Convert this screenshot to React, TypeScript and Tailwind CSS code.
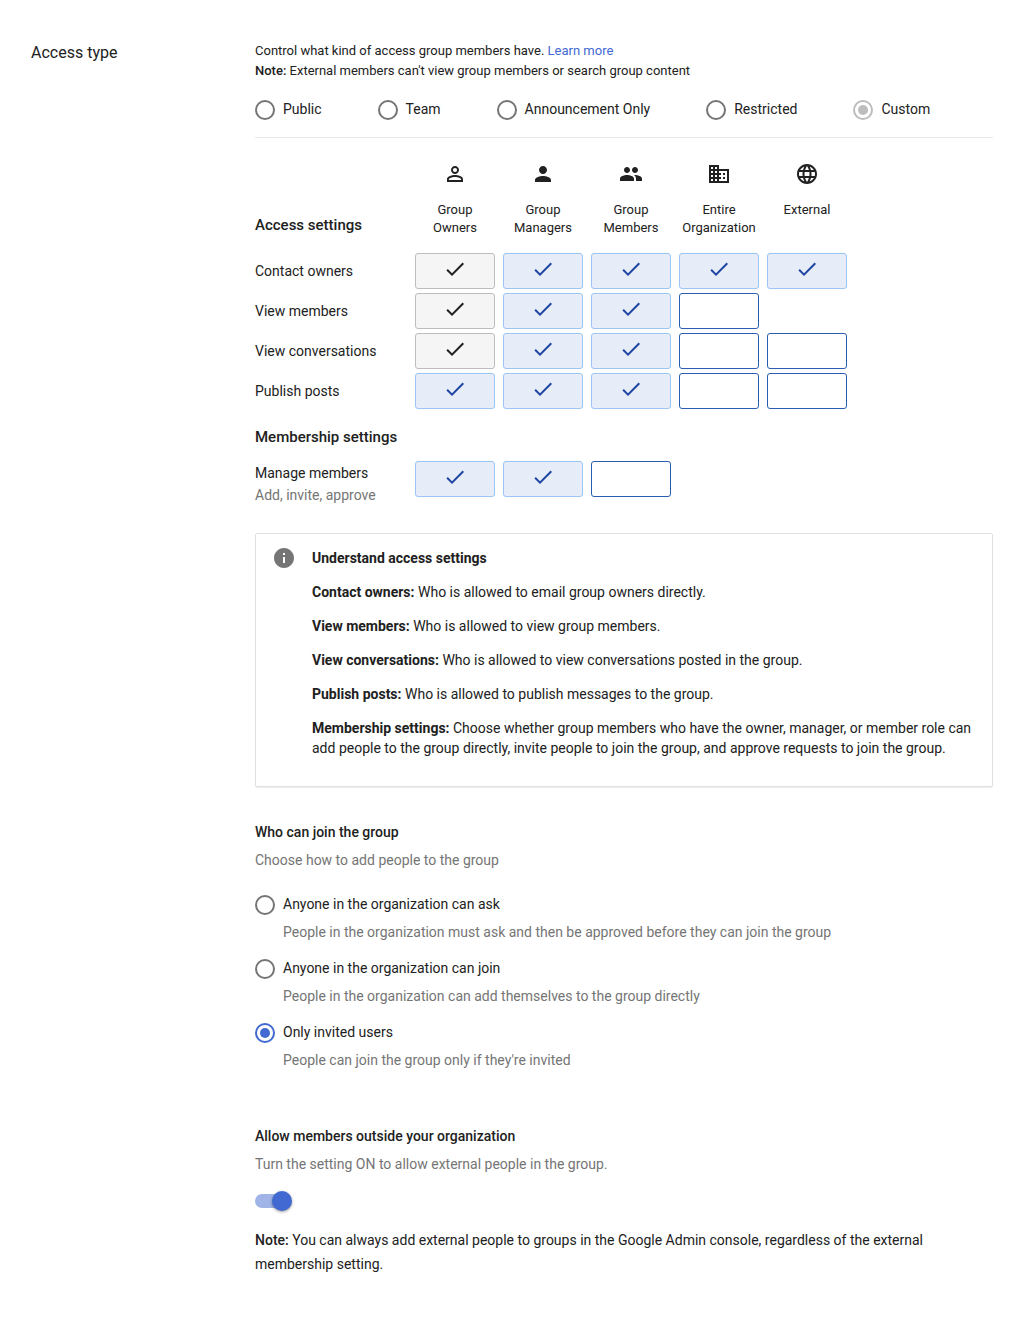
import type { ReactNode } from "react";
import {
  MdBusiness,
  MdCheck,
  MdInfo,
  MdLanguage,
  MdPeople,
  MdPerson,
  MdPersonOutline,
} from "react-icons/md";

type CellState = "locked" | "on" | "off" | "none";
type RadioState = "off" | "on" | "disabled";

const columns: { icon: ReactNode; lines: string[] }[] = [
  { icon: <MdPersonOutline />, lines: ["Group", "Owners"] },
  { icon: <MdPerson />, lines: ["Group", "Managers"] },
  { icon: <MdPeople />, lines: ["Group", "Members"] },
  { icon: <MdBusiness />, lines: ["Entire", "Organization"] },
  { icon: <MdLanguage />, lines: ["External"] },
];

const accessRows: { label: string; cells: CellState[] }[] = [
  { label: "Contact owners", cells: ["locked", "on", "on", "on", "on"] },
  { label: "View members", cells: ["locked", "on", "on", "off", "none"] },
  { label: "View conversations", cells: ["locked", "on", "on", "off", "off"] },
  { label: "Publish posts", cells: ["on", "on", "on", "off", "off"] },
];

const help = [
  ["Contact owners:", "Who is allowed to email group owners directly."],
  ["View members:", "Who is allowed to view group members."],
  ["View conversations:", "Who is allowed to view conversations posted in the group."],
  ["Publish posts:", "Who is allowed to publish messages to the group."],
  [
    "Membership settings:",
    "Choose whether group members who have the owner, manager, or member role can add people to the group directly, invite people to join the group, and approve requests to join the group.",
  ],
];

const joinOptions: { label: string; hint: string; state: RadioState }[] = [
  {
    label: "Anyone in the organization can ask",
    hint: "People in the organization must ask and then be approved before they can join the group",
    state: "off",
  },
  {
    label: "Anyone in the organization can join",
    hint: "People in the organization can add themselves to the group directly",
    state: "off",
  },
  {
    label: "Only invited users",
    hint: "People can join the group only if they're invited",
    state: "on",
  },
];

const ring: Record<RadioState, string> = {
  off: "border-[#757575]",
  on: "border-[#4169d1]",
  disabled: "border-[#bdbdbd]",
};

function Radio({ state }: { state: RadioState }) {
  return (
    <span
      className={`flex size-5 shrink-0 items-center justify-center rounded-full border-2 ${ring[state]}`}
    >
      {state === "on" && <span className="size-2.5 rounded-full bg-[#4169d1]" />}
      {state === "disabled" && <span className="size-2.5 rounded-full bg-[#bdbdbd]" />}
    </span>
  );
}

const cellStyle: Record<CellState, string> = {
  locked: "border-[#bdbdbd] bg-[#f5f5f5] text-[#212121]",
  on: "border-[#9ac5f4] bg-[#e7ecf9] text-[#1f46a0]",
  off: "border-[#2a5db0] bg-white",
  none: "border-transparent",
};

function Cell({ state }: { state: CellState }) {
  return (
    <div
      className={`flex h-9 w-20 shrink-0 justify-center rounded-[3px] border pt-[3px] ${cellStyle[state]}`}
    >
      {(state === "on" || state === "locked") && <MdCheck className="size-6" />}
    </div>
  );
}

export default function App() {
  return (
    <div className="flex h-[1324px] w-[1012px] bg-white pt-[41px] pl-[31px] font-[Roboto,sans-serif] text-sm leading-5 text-[#212121]">
      <h1 className="w-56 shrink-0 pt-px text-base leading-[22px]">Access type</h1>

      <main className="w-[738px]">
        <div className="h-[59px] text-[13px]">
          <p>
            Control what kind of access group members have.{" "}
            <a className="text-[#4169d1]">Learn more</a>
          </p>
          <p>
            <b className="font-medium">Note:</b> External members can't view group members or
            search group content
          </p>
        </div>

        <div className="flex h-[38px] gap-14 border-b border-[#e8e8e8]">
          {["Public", "Team", "Announcement Only", "Restricted", "Custom"].map((name) => (
            <div key={name} className="flex gap-2">
              <Radio state={name === "Custom" ? "disabled" : "off"} />
              <span className="-mt-px">{name}</span>
            </div>
          ))}
        </div>

        <div className="flex h-[115px] pt-6">
          <h2 className="w-[156px] pt-[53px] text-[15px] font-medium">Access settings</h2>
          {columns.map((c) => (
            <div
              key={c.lines.join(" ")}
              className="flex w-[88px] flex-col items-center text-[13px] leading-[18px]"
            >
              <span className="mb-[15px] text-2xl leading-none">{c.icon}</span>
              {c.lines.map((l) => (
                <span key={l}>{l}</span>
              ))}
            </div>
          ))}
        </div>

        <div className="flex flex-col gap-1">
          {accessRows.map((row) => (
            <div key={row.label} className="flex items-center gap-2">
              <span className="w-[152px]">{row.label}</span>
              {row.cells.map((s, i) => (
                <Cell key={i} state={s} />
              ))}
            </div>
          ))}
        </div>

        <h2 className="mt-[18px] text-[15px] font-medium">Membership settings</h2>
        <div className="mt-[14px] flex h-[72px] gap-2">
          <div className="w-[152px] pt-px leading-[22px]">
            <p>Manage members</p>
            <p className="text-[#757575]">Add, invite, approve</p>
          </div>
          <Cell state="on" />
          <Cell state="on" />
          <Cell state="off" />
        </div>

        <section className="flex h-[254px] rounded-[2px] border border-[#e0e0e0] pt-3 pr-4 pl-4 shadow-[0_1px_1px_rgba(0,0,0,0.08)]">
          <MdInfo className="mr-4 size-6 shrink-0 text-[#757575]" />
          <div className="flex flex-col gap-[14px] pt-0.5">
            <h3 className="font-bold">Understand access settings</h3>
            {help.map(([term, text]) => (
              <p key={term}>
                <b className="font-bold">{term}</b> {text}
              </p>
            ))}
          </div>
        </section>

        <h3 className="mt-[35px] font-medium">Who can join the group</h3>
        <p className="mt-2 text-[#757575]">Choose how to add people to the group</p>
        <div className="mt-6 flex flex-col gap-4">
          {joinOptions.map((o) => (
            <div key={o.label} className="flex h-12 gap-2">
              <div className="pt-px">
                <Radio state={o.state} />
              </div>
              <div>
                <p>{o.label}</p>
                <p className="mt-2 text-[#757575]">{o.hint}</p>
              </div>
            </div>
          ))}
        </div>

        <h3 className="mt-14 font-medium">Allow members outside your organization</h3>
        <p className="mt-2 text-[#757575]">Turn the setting ON to allow external people in the group.</p>
        <div className="mt-5 flex h-[14px] w-9 items-center justify-end rounded-full bg-[#a0b4e8]">
          <span className="-mr-px size-5 shrink-0 rounded-full bg-[#4169d1] shadow-[0_1px_3px_rgba(0,0,0,0.4)]" />
        </div>
        <p className="mt-5 leading-6">
          <b className="font-medium">Note:</b> You can always add external people to groups in the
          Google Admin console, regardless of the external membership setting.
        </p>
      </main>
    </div>
  );
}
